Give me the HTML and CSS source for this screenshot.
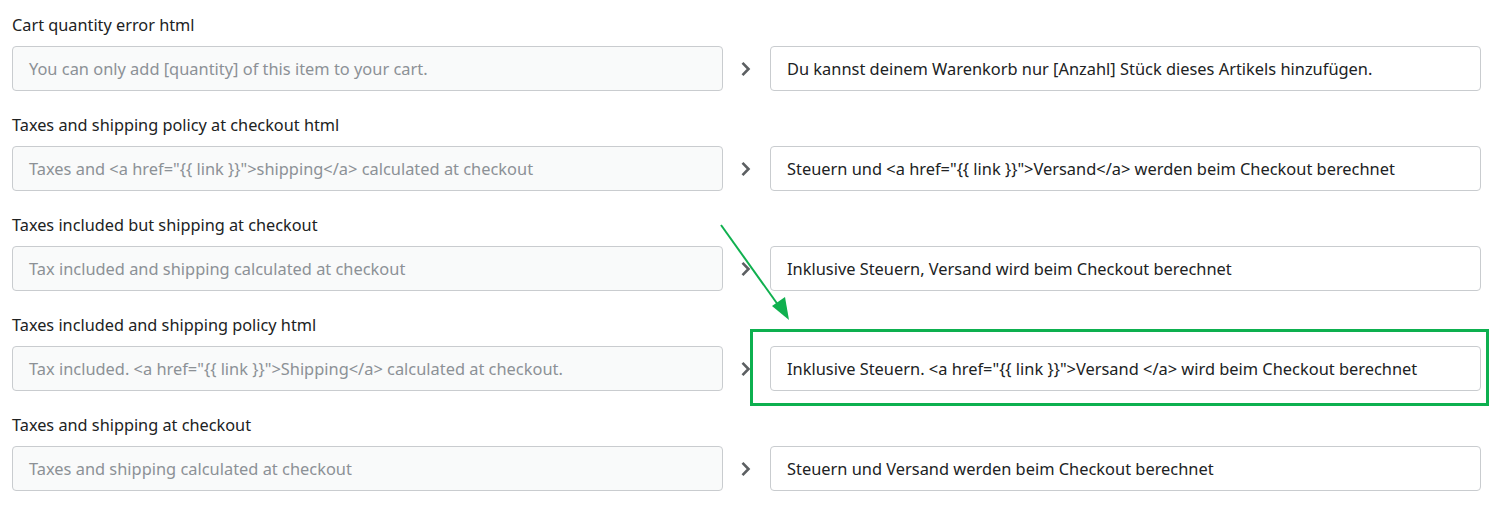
FILE: index.html
```html
<!DOCTYPE html>
<html>
<head>
<meta charset="utf-8">
<link rel="stylesheet" href="styles.css">
</head>
<body>
<div class="page">
  <div class="row">
    <div class="label">Cart quantity error html</div>
    <div class="fields">
      <div class="field source">You can only add [quantity] of this item to your cart.</div>
      <div class="chev"><svg width="12" height="16" viewBox="0 0 12 16"><path d="M2.5 1.8 L8.5 8 L2.5 14.2" fill="none" stroke="#5c5f62" stroke-width="2.6"/></svg></div>
      <div class="field target">Du kannst deinem Warenkorb nur [Anzahl] Stück dieses Artikels hinzufügen.</div>
    </div>
  </div>
  <div class="row">
    <div class="label">Taxes and shipping policy at checkout html</div>
    <div class="fields">
      <div class="field source">Taxes and &lt;a href="{{ link }}"&gt;shipping&lt;/a&gt; calculated at checkout</div>
      <div class="chev"><svg width="12" height="16" viewBox="0 0 12 16"><path d="M2.5 1.8 L8.5 8 L2.5 14.2" fill="none" stroke="#5c5f62" stroke-width="2.6"/></svg></div>
      <div class="field target">Steuern und &lt;a href="{{ link }}"&gt;Versand&lt;/a&gt; werden beim Checkout berechnet</div>
    </div>
  </div>
  <div class="row">
    <div class="label">Taxes included but shipping at checkout</div>
    <div class="fields">
      <div class="field source">Tax included and shipping calculated at checkout</div>
      <div class="chev"><svg width="12" height="16" viewBox="0 0 12 16"><path d="M2.5 1.8 L8.5 8 L2.5 14.2" fill="none" stroke="#5c5f62" stroke-width="2.6"/></svg></div>
      <div class="field target">Inklusive Steuern, Versand wird beim Checkout berechnet</div>
    </div>
  </div>
  <div class="row">
    <div class="label">Taxes included and shipping policy html</div>
    <div class="fields">
      <div class="field source">Tax included. &lt;a href="{{ link }}"&gt;Shipping&lt;/a&gt; calculated at checkout.</div>
      <div class="chev"><svg width="12" height="16" viewBox="0 0 12 16"><path d="M2.5 1.8 L8.5 8 L2.5 14.2" fill="none" stroke="#5c5f62" stroke-width="2.6"/></svg></div>
      <div class="field target">Inklusive Steuern. &lt;a href="{{ link }}"&gt;Versand &lt;/a&gt; wird beim Checkout berechnet</div>
    </div>
  </div>
  <div class="row">
    <div class="label">Taxes and shipping at checkout</div>
    <div class="fields">
      <div class="field source">Taxes and shipping calculated at checkout</div>
      <div class="chev"><svg width="12" height="16" viewBox="0 0 12 16"><path d="M2.5 1.8 L8.5 8 L2.5 14.2" fill="none" stroke="#5c5f62" stroke-width="2.6"/></svg></div>
      <div class="field target">Steuern und Versand werden beim Checkout berechnet</div>
    </div>
  </div>
  <div class="highlight"></div>
  <svg class="arrow" width="1498" height="517" viewBox="0 0 1498 517">
    <line x1="721" y1="225" x2="781" y2="309" stroke="#10b04f" stroke-width="2"/>
    <polygon points="789,320 772,306 785,297" fill="#10b04f"/>
  </svg>
</div>
</body>
</html>
```
FILE: styles.css
```css
html, body {
  margin: 0;
  padding: 0;
  background: #ffffff;
}
.page {
  position: relative;
  width: 1498px;
  height: 517px;
  padding: 13px 12px 0 12px;
  box-sizing: border-box;
  font-family: "Noto Sans", "Open Sans", sans-serif;
  font-size: 16.4px;
}
.row {
  display: flex;
  flex-direction: column;
  gap: 9px;
  margin-bottom: 22px;
}
.label {
  height: 24px;
  line-height: 24px;
  color: #202223;
  font-size: 16.3px;
}
.fields {
  display: grid;
  grid-template-columns: 711px 47px 711px;
  height: 45px;
}
.field {
  box-sizing: border-box;
  height: 45px;
  border-radius: 4px;
  padding: 0 16px 1px 16px;
  display: flex;
  align-items: center;
  white-space: nowrap;
  overflow: hidden;
}
.source {
  background: #f9fafa;
  border: 1px solid #c9cccf;
  color: #8c9196;
}
.target {
  background: #ffffff;
  border: 1px solid #c9cccf;
  color: #202223;
}
.chev {
  display: flex;
  align-items: center;
  justify-content: center;
  padding-right: 2px;
}
.highlight {
  position: absolute;
  left: 750px;
  top: 329px;
  width: 739px;
  height: 77px;
  box-sizing: border-box;
  border: 3px solid #0db04f;
  pointer-events: none;
}
.arrow {
  position: absolute;
  left: 0;
  top: 0;
  pointer-events: none;
}
```
